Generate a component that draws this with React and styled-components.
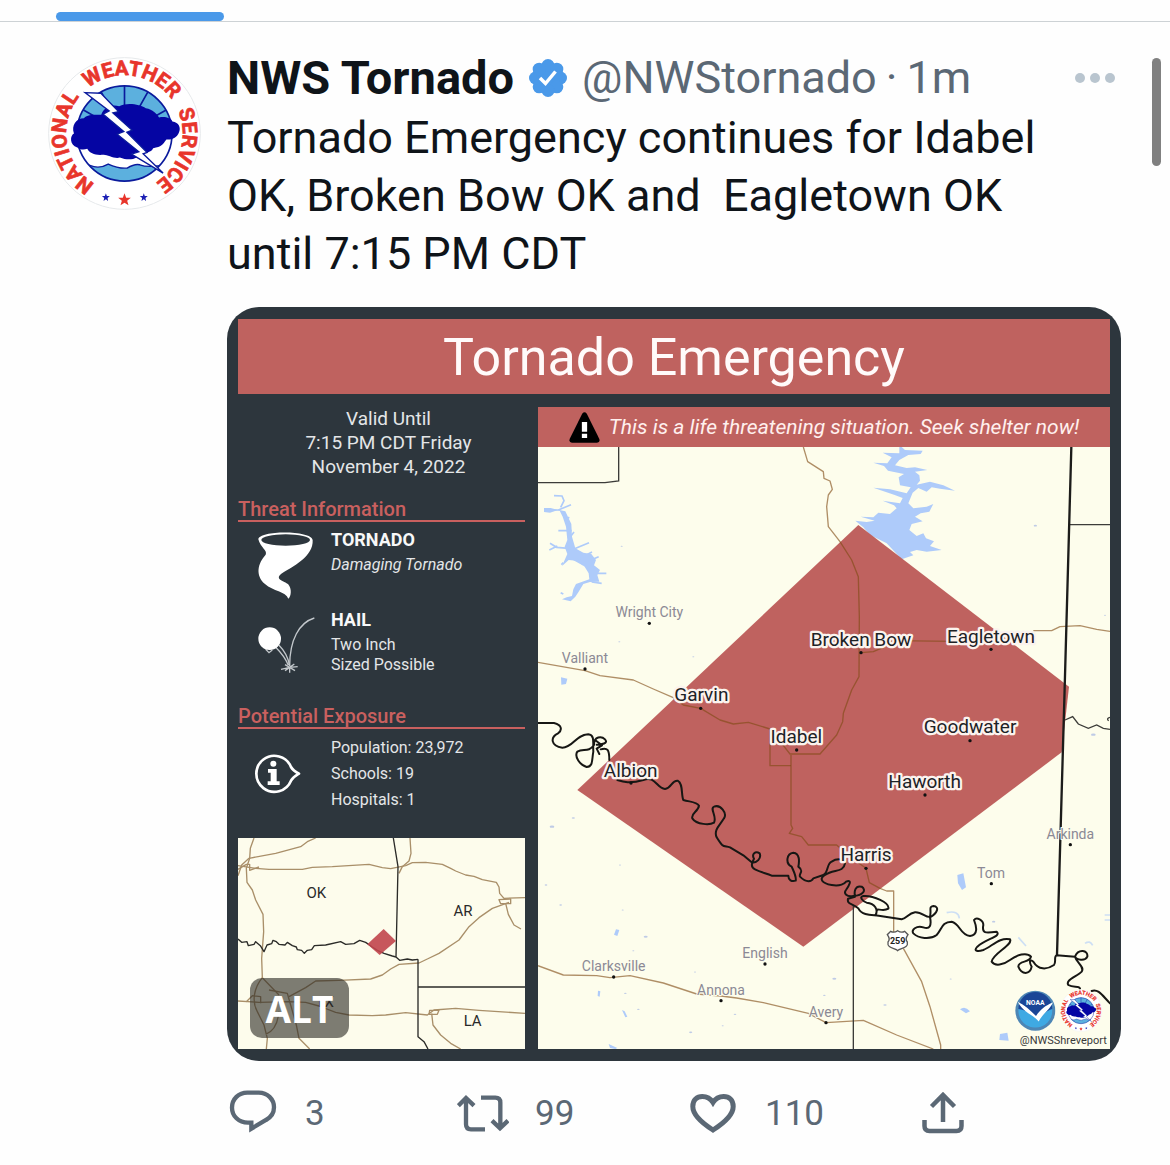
import React, { useId } from 'react';
import styled, { createGlobalStyle } from 'styled-components';

const GlobalStyle = createGlobalStyle`
  * {
    box-sizing: border-box;
  }

  body {
    margin: 0;
    background: #fefefe;
    color: #0f1419;
    font-family: Roboto, 'Liberation Sans', sans-serif;
  }
`;

// Page
const Page = styled.main`
  position: relative;
`;

const TabBar = styled.nav`
  display: flex;
  align-items: flex-end;
  height: 22px;
  padding-left: 56px;
  border-bottom: 1px solid #cdd2d5;
`;

const TabIndicator = styled.div`
  width: 168px;
  height: 9px;
  border-radius: 5px;
  background: #4a99e9;
`;

const ScrollThumb = styled.div`
  position: absolute;
  top: 58px;
  right: 9px;
  width: 9px;
  height: 108px;
  border-radius: 5px;
  background: #808080;
`;

// Tweet
const Tweet = styled.article`
  display: flex;
  gap: 26px;
  padding: 27px 49px 24px 48px;
`;

const Avatar = styled.a`
  flex: none;
  width: 153px;
  height: 153px;
  margin-top: 8px;

  svg {
    display: block;
  }
`;

const Content = styled.div`
  flex: 1;
  min-width: 0;
`;

const Header = styled.header`
  display: flex;
  align-items: center;
  gap: 15px;
  height: 58px;
  font-size: 45px;
  line-height: 58px;
  white-space: nowrap;
`;

const Name = styled.a`
  color: #0f1419;
  font-size: 47px;
  font-weight: 700;
  text-decoration: none;
`;

const Meta = styled.span`
  display: flex;
  gap: 9px;
  color: #5b6875;

  a {
    color: inherit;
    text-decoration: none;
  }
`;

const MoreButton = styled.button`
  margin-left: auto;
  padding: 0 10px;
  border: 0;
  background: none;
  line-height: 0;
`;

const TweetText = styled.p`
  margin: 2px 0 24px;
  padding-right: 40px;
  font-size: 45px;
  line-height: 58px;
  white-space: pre-wrap;
`;

const Actions = styled.footer`
  display: grid;
  grid-template-columns: repeat(3, 230fr) 204fr;
  height: 56px;
  margin-top: 24px;
`;

const ActionButton = styled.button`
  display: flex;
  align-items: center;
  gap: 26px;
  padding: 0;
  border: 0;
  background: none;
  color: #5b6875;
  font-family: inherit;
  font-size: 35px;

  svg {
    width: 52px;
    height: 48px;
    fill: none;
    stroke: currentColor;
  }
`;

// Warning graphic
const Card = styled.section`
  position: relative;
  padding: 12px 11px 12px;
  border-radius: 32px;
  overflow: hidden;
  background: #2d363d;
  color: #e4e6e8;
`;

const CardTitle = styled.h2`
  margin: 0 0 13px;
  padding-top: 3px;
  background: #bf625f;
  color: #fffafa;
  font-size: 52px;
  font-weight: 400;
  line-height: 72px;
  text-align: center;
`;

const CardBody = styled.div`
  display: grid;
  grid-template-columns: 287fr 572fr;
  gap: 13px;
`;

const Sidebar = styled.div`
  display: flex;
  flex-direction: column;
`;

const ValidUntil = styled.p`
  margin: 0;
  padding-left: 14px;
  font-size: 19px;
  line-height: 24px;
  text-align: center;
`;

const SectionTitle = styled.h3`
  margin: ${(props) => props.$top}px 0 6px;
  border-bottom: 2px solid #c9605f;
  color: #c9605f;
  font-size: 20px;
  font-weight: 500;
  line-height: 22px;
`;

const Threat = styled.div`
  display: grid;
  grid-template-columns: 93px 1fr;
  align-items: ${(props) => props.$align || 'start'};

  & + & {
    margin-top: 8px;
  }

  svg {
    display: block;
    width: 93px;
  }
`;

const ThreatName = styled.h4`
  margin: 0 0 3px;
  color: #f8f8f8;
  font-size: 18px;
  font-weight: 700;
  line-height: 24px;
`;

const ThreatText = styled.p`
  margin: 0;
  font-size: 16px;
  font-style: ${(props) => (props.$italic ? 'italic' : 'normal')};
  line-height: 20px;
`;

const Exposure = styled.ul`
  margin: 0;
  padding: 0;
  list-style: none;
  font-size: 16px;
  line-height: 26px;
`;

const InsetMap = styled.svg`
  display: block;
  width: 100%;
  margin-top: auto;
  background: #fdfcec;
`;

const MapPanel = styled.div`
  min-width: 0;
`;

const Banner = styled.p`
  display: flex;
  align-items: center;
  justify-content: center;
  gap: 9px;
  height: 40px;
  margin: 0;
  background: #bf625f;
  color: #fff0ee;
  font-size: 21px;
  font-style: italic;
  white-space: nowrap;
`;

const AreaMap = styled.svg`
  display: block;
  width: 100%;
  background: #fdfdec;
`;

const AltButton = styled.button`
  position: absolute;
  bottom: 23px;
  left: 23px;
  width: 99px;
  height: 60px;
  padding: 0;
  border: 0;
  border-radius: 12px;
  background: rgba(40, 38, 34, 0.6);
  color: #fff;
  font-family: 'Open Sans', sans-serif;
  font-size: 37px;
  font-weight: 700;
`;

const PlaceText = styled.text`
  fill: ${(props) => (props.$inside ? '#1d2226' : '#8b8995')};
  stroke: ${(props) => (props.$inside ? '#fbf3ee' : '#fdfdec')};
  stroke-width: ${(props) => (props.$inside ? 14 : 6)}px;
  stroke-linejoin: round;
  paint-order: stroke;
  font-size: ${(props) => (props.$inside ? 57 : 42)}px;
  text-anchor: middle;
`;

const StateText = styled.text`
  fill: #2a2a2a;
  font-size: 45px;
  text-anchor: middle;
`;

const places = [
  { name: 'Broken Bow', x: 993, y: 738, dot: [993, 758], inside: true },
  { name: 'Eagletown', x: 1383, y: 728, dot: [1383, 748], inside: true },
  { name: 'Garvin', x: 514, y: 904, dot: [512, 925], inside: true },
  { name: 'Idabel', x: 799, y: 1028, dot: [800, 1050], inside: true },
  { name: 'Albion', x: 302, y: 1130, dot: [303, 1149], inside: true },
  { name: 'Goodwater', x: 1320, y: 1000, dot: [1320, 1022], inside: true },
  { name: 'Haworth', x: 1184, y: 1163, dot: [1185, 1185], inside: true },
  { name: 'Harris', x: 1008, y: 1384, dot: [1008, 1405], inside: true },
  { name: 'Wright City', x: 358, y: 651, dot: [358, 670] },
  { name: 'Valliant', x: 165, y: 790, dot: [165, 807] },
  { name: 'English', x: 705, y: 1673, dot: [705, 1692] },
  { name: 'Clarksville', x: 251, y: 1713, dot: [251, 1731] },
  { name: 'Annona', x: 573, y: 1784, dot: [573, 1802] },
  { name: 'Avery', x: 888, y: 1850, dot: [888, 1868] },
  { name: 'Arkinda', x: 1621, y: 1316, dot: [1621, 1334] },
  { name: 'Tom', x: 1383, y: 1433, dot: [1384, 1451] },
];

const ponds = [
  [66, 1280, 7], [130, 1254, 5], [270, 1395, 3], [48, 1455, 4], [92, 1515, 4],
  [278, 1530, 3], [347, 1610, 6], [310, 1652, 3], [286, 1780, 4], [325, 1828, 4],
  [482, 1897, 5], [615, 1843, 4], [578, 1877, 3], [495, 1716, 3], [490, 770, 3],
  [268, 725, 3], [275, 439, 3], [1516, 377, 5], [913, 1736, 6], [1262, 1737, 3],
  [1391, 1565, 5], [1725, 646, 3], [1690, 1004, 7], [883, 1786, 4], [1065, 1815, 5],
];

function NwsLogo(props) {
  const ring = useId();
  return (
    <svg viewBox="24 26 460 460" overflow="visible" role="img" aria-label="National Weather Service" {...props}>
      <defs>
        <path id={ring} d="M254 431a175 175 0 0 1 0-350a175 175 0 0 1 0 350" />
        <clipPath id={`${ring}-disc`}>
          <circle cx="254" cy="256" r="143" />
        </clipPath>
      </defs>
      <circle cx="254" cy="256" r="228" fill="#fff" stroke="#e6e9eb" strokeWidth="3" />
      <g clipPath={`url(#${ring}-disc)`}>
        <path d="M100 100H410V256H100z" fill="#5cb0de" />
        <path d="M100 345L150 352Q178 364 205 348Q235 362 262 360Q285 346 300 350Q330 362 400 345V410H100z" fill="#5cb0de" stroke="#0a1a9c" strokeWidth="4" />
        <path d="M254 256V110M254 256L182 128M254 256L326 128M254 256L128 184M254 256L382 184" stroke="#0a1a9c" strokeWidth="5" />
      </g>
      <circle cx="254" cy="256" r="143" fill="none" stroke="#0a1a9c" strokeWidth="5" />
      <path
        d="M112 298C88 290 90 262 102 256C94 232 108 210 132 210C145 198 165 200 184 200C190 178 215 166 238 174C262 162 300 168 318 180C340 184 350 196 358 208C375 204 395 210 398 220C418 222 424 240 418 252C412 268 396 276 380 274C368 290 366 296 340 300C336 312 316 316 306 312C296 332 270 340 240 328C225 334 200 318 190 320C165 322 150 316 142 302C130 306 120 304 112 298z"
        fill="#0505a3"
      />
      <path
        d="M135 133L183 135L236 190L219 194L277 246L261 252L322 313L310 317L370 375L275 318L297 311L232 258L252 250L190 198L208 188z"
        fill="#fff"
        stroke="#0a1a9c"
        strokeWidth="4"
      />
      <g fill="#e8352b" stroke="#e8352b" strokeWidth="2" fontSize="62" fontWeight="700" textAnchor="middle">
        <text><textPath href={`#${ring}`} startOffset="22.2%">NATIONAL</textPath></text>
        <text><textPath href={`#${ring}`} startOffset="52.2%">WEATHER</textPath></text>
        <text><textPath href={`#${ring}`} startOffset="79.700%">SERVICE</textPath></text>
      </g>
      <path d="M254 436l5 13h14l-11 9 4 14-12-8-12 8 4-14-11-9h14z" fill="#e8352b" />
      <path d="M198 436l3 8h9l-7 6 2 9-7-5-7 5 2-9-7-6h9zM312 436l3 8h9l-7 6 2 9-7-5-7 5 2-9-7-6h9z" fill="#1b1fb4" />
    </svg>
  );
}

function NoaaLogo(props) {
  return (
    <svg viewBox="0 0 120 120" role="img" aria-label="NOAA" {...props}>
      <circle cx="60" cy="60" r="59" fill="#4d86b5" />
      <circle cx="60" cy="60" r="50" fill="#3fa9e3" />
      <path d="M10 55A50 50 0 0 1 110 55C92 60 80 72 66 82C50 70 32 58 10 55z" fill="#1a4596" />
      <path d="M8 34C28 44 44 58 62 76C74 58 90 44 112 36C102 58 82 68 70 92C54 72 24 66 8 34z" fill="#fff" />
      <text x="60" y="44" fill="#fff" fontSize="20" fontWeight="700" textAnchor="middle">NOAA</text>
    </svg>
  );
}

function VerifiedBadge() {
  return (
    <svg width="38" height="40" viewBox="-19 -20 38 40" role="img" aria-label="Verified account">
      <g fill="#4a99e9">
        <circle r="15" />
        {[0, 45, 90, 135, 180, 225, 270, 315].map((angle) => (
          <circle key={angle} cy="-12.500" r="6.500" transform={`rotate(${angle})`} />
        ))}
      </g>
      <path d="M-8 0L-2.500 5.500L7.500 -6.500" fill="none" stroke="#fff" strokeWidth="3.500" />
    </svg>
  );
}

function TornadoIcon() {
  return (
    <svg viewBox="37 684 279 216" aria-hidden="true">
      <path
        fill="#fff"
        d="M98 718C100 690 258 690 261 720C264 770 200 800 166 822C148 838 172 842 187 852C200 866 196 890 188 896C180 874 142 874 118 852C88 826 96 790 120 764C126 752 104 742 98 718z"
      />
      <ellipse cx="180" cy="720" rx="73" ry="17" fill="#2d363d" />
    </svg>
  );
}

function HailIcon() {
  return (
    <svg viewBox="37 75 279 180" aria-hidden="true" fill="none" stroke="#c3c8cc" strokeWidth="4">
      <path d="M266 84C220 98 192 150 192 228" />
      <path d="M160 166C178 184 188 204 192 228M150 172C168 190 180 206 188 226M120 178L130 188L140 180" />
      <path d="M192 232L166 238M192 232L216 230M192 232L178 224M192 232L206 222M192 232L192 248M192 232L178 242M192 232L208 242" />
      <circle cx="132" cy="146" r="34" fill="#fff" stroke="none" />
    </svg>
  );
}

function InfoIcon() {
  return (
    <svg viewBox="37 487 279 132" aria-hidden="true">
      <path
        d="M196 532A54 54 0 1 0 196 573C202 562 210 558 220 552C210 547 202 543 196 532z"
        fill="none"
        stroke="#fff"
        strokeWidth="8"
        strokeLinejoin="round"
      />
      <circle cx="143" cy="522" r="9" fill="#fff" />
      <path d="M127 538H153V575H162V586H126V575H135V549H127z" fill="#fff" />
    </svg>
  );
}

function WarningIcon() {
  return (
    <svg width="31" height="31" viewBox="104 36 94 94" aria-hidden="true">
      <path d="M144 41Q151 32 158 41L196 118Q199 128 189 129H113Q103 128 106 118z" fill="#000" />
      <path d="M143 66H159V96H143zM143 102H159V115H143z" fill="#fff" />
    </svg>
  );
}

function Inset() {
  return (
    <InsetMap viewBox="37 39 861 633" role="img" aria-label="Regional map">
      <g fill="none" stroke="#a98f69" strokeWidth="4" strokeLinejoin="round">
        <path d="M85 39L74 70L72 100L62 130L64 172L80 195L90 225L112 268L114 320L108 400L110 458L160 510" />
        <path d="M37 152L48 120L70 100L150 85L225 65L245 50L270 39" />
        <path d="M37 122L90 130L130 133H230L260 127L320 125L430 118L470 128L495 131L540 122L560 113L600 112L650 118L675 130L690 138L720 150L745 154L770 164L812 172L820 186L822 205L835 220L898 218" />
        <path d="M37 133L62 118H72V136L100 126M820 224L855 222V236H825z" />
        <path d="M553 39L556 85L550 108L530 125L520 145" />
        <path d="M850 232L800 250L760 278L730 305L700 345L640 385L605 402L580 414L520 418L495 432L470 450L435 462L340 466L270 468L240 488L190 515" />
        <path d="M840 235L848 268L865 300L886 312" />
        <path d="M37 528L100 532L190 530L240 532L280 543L330 562L370 570L440 572L480 570L540 563L605 570L625 555L690 550L760 556L898 565" />
        <path d="M612 556H640L635 568H610zM618 565L622 600L645 630L675 655L705 672" />
        <path d="M110 458C84 490 78 530 95 560L115 600L125 640L122 672M130 495L185 505L195 540L212 600L220 640L252 672M160 560C156 600 142 620 120 628M62 530L80 512L105 515V535" />
      </g>
      <g fill="none" stroke="#2b2b28" strokeWidth="4" strokeLinejoin="round">
        <path d="M503 39L517 125L514 260L511 395M577 403V635L595 650L607 672M577 486H898" />
        <path d="M37 342L48 352L64 350L68 362L85 358L90 350L104 362L115 380L124 360L138 356L142 346L152 350L160 358L178 360L185 352L200 362L212 366L215 374L228 376L236 385L245 376L258 374L266 362L300 360L345 350L360 358L385 356L402 346L420 352L440 366L455 376L475 385L500 393L511 396L522 406L545 402L560 405L577 403" />
      </g>
      <path d="M474 312L511 348L462 390L425 358z" fill="#c1454c" fillOpacity="0.9" />
      <StateText x="272" y="218">OK</StateText>
      <StateText x="712" y="272">AR</StateText>
      <StateText x="741" y="603">LA</StateText>
      <StateText x="297" y="546">TX</StateText>
    </InsetMap>
  );
}

function WarningMap() {
  return (
    <AreaMap viewBox="24 141 1716 1806" role="img" aria-label="Tornado emergency area">
      {/* lakes */}
      <g fill="#aecbfa">
        <path d="M1115 141L1125 150L1178 152L1172 162L1135 165L1108 180L1095 196L1130 204L1155 202L1192 210L1155 215L1168 226L1170 242L1160 254L1200 245L1240 256L1275 272L1230 266L1205 262L1190 275L1165 264L1148 278L1135 310L1150 325L1190 320L1210 312L1198 335L1172 340L1155 350L1178 364L1145 372L1138 390L1160 408L1180 400L1188 415L1212 424L1200 438L1235 450L1190 455L1160 450L1140 456L1150 466L1115 478L1070 430L1020 405L1000 382L976 362L1010 366L1034 362L992 350L1030 352L1045 338L1080 342L1100 325L1092 316L1058 302L1110 310L1118 294L1092 284L1030 263L1080 268L1130 280L1142 262L1110 256L1106 232L1122 222L1074 212L1062 198L1030 188L1072 190L1085 172L1058 158L1108 160L1108 141z" />
        <path d="M1282 1425L1300 1420L1308 1462L1296 1470L1284 1450zM1410 1902L1432 1898L1436 1922L1408 1920zM1290 1828Q1305 1816 1320 1834L1308 1840zM93 832L112 836L108 852L94 854zM258 1588L268 1590L262 1608L252 1604zM204 1772L211 1774L209 1790L203 1788zM236 1932L262 1944L256 1947L240 1944zM276 1830L284 1834L292 1850L286 1852z" />
        <path d="M88 330L106 334L124 372L126 410L136 445L160 458L184 462L198 480L192 496L210 510L202 525L208 545L180 546L160 552L146 575L136 590L122 604L96 598L110 592L126 588L130 568L138 552L178 538L176 520L164 500L140 482L116 480L96 498L112 462L104 440L112 420L108 380L98 350z" />
      </g>
      <g fill="none" stroke="#aecbfa" strokeWidth="5">
        <path d="M72 287L96 288L102 302L92 322M42 330H90" />
        <path d="M85 330L123 314M85 392H125M60 430L80 442L125 446M58 450L82 438M130 448L177 428M140 480L186 456M160 490L206 470M190 520H229M185 546L215 550M100 582L92 578M120 412L132 396M94 494L100 488M130 478L160 494M104 360L118 352" />
        <path d="M1250 1538Q1285 1530 1288 1555M1465 1612L1488 1638M1665 1630Q1680 1620 1688 1636M1724 1545H1740M1724 1560H1740" strokeOpacity="0.6" />
      </g>
      <path d="M42 324L62 324L84 330L60 338L42 336z" fill="#aecbfa" />
      <g fill="#bfcbe6">
        {ponds.map(([x, y, r], index) => (
          <ellipse key={`pond-${index}`} cx={x} cy={y} rx={r} ry={r / 2} />
        ))}
      </g>

      <path d="M985 375L1617 860L1595 1057L820 1640L142 1170z" fill="#bf625f" />

      {/* roads */}
      <g fill="none" stroke="#804a14" strokeOpacity="0.62" strokeWidth="4" strokeLinejoin="round">
        <path d="M820 141L833 185L880 215L882 235L900 243L907 268L895 285L890 320L895 380L930 425L965 480L985 530L988 650L987 830L965 870L940 940L938 965L920 1005L870 1062H780L755 1030" />
        <path d="M993 758L1030 755L1060 742L1090 722L1270 724M1510 692H1565L1590 680L1650 677L1700 688L1740 694" />
        <path d="M24 787L165 812L210 827L310 840L370 867L430 893L460 915L512 925L570 960L610 972L655 967L720 987V1097H783" />
        <path d="M783 1065V1275L788 1285L778 1300L815 1310L835 1335H920L960 1370L1008 1405L1018 1448L1050 1465L1070 1473H1091V1600M1120 1645L1175 1745L1200 1820L1232 1935V1947" />
        <path d="M24 1697L100 1725L200 1727L240 1733L300 1727L400 1749L500 1782L573 1788L620 1794L700 1808L835 1840L888 1868L1000 1861L1100 1905L1210 1947" />
      </g>

      {/* county and state lines */}
      <g fill="none" stroke="#3c3c39" strokeWidth="4">
        <path d="M24 248H225L266 243V141M970 1515V1947M1618 374H1740" />
        <path d="M1605 960L1628 950L1645 972L1675 985L1700 975L1720 985L1740 988M1740 952Q1728 956 1736 962" />
      </g>
      <path d="M1624 141L1603 900L1581 1665" fill="none" stroke="#1c1c1a" strokeWidth="7" />

      {/* Red River */}
      <g fill="none" stroke="#171714" strokeWidth="6" strokeLinejoin="round" strokeLinecap="round">
        <path d="M24 969H72C98 975 96 992 84 1000C60 1012 62 1038 97 1043C130 1043 135 1005 175 1003C196 1005 188 1030 190 1055C185 1080 190 1100 170 1101C150 1095 132 1070 142 1055C160 1045 176 1058 192 1035C192 1008 215 1008 225 1018C236 1030 215 1034 200 1034M198 1022L216 1036L200 1046L208 1062M212 1048C232 1042 238 1048 238 1080" />
        <path d="M262 1140C280 1146 300 1152 340 1140C375 1125 380 1165 405 1167C425 1165 425 1140 443 1142C460 1150 453 1185 460 1200C480 1206 500 1205 507 1217C505 1235 482 1240 487 1255C500 1275 540 1275 552 1268C562 1250 538 1225 552 1220C572 1212 592 1240 582 1255C570 1275 550 1290 560 1312C580 1345 580 1336 600 1342L640 1366L665 1387C680 1390 695 1375 689 1360C676 1352 664 1362 672 1376C664 1390 662 1402 675 1408C695 1418 710 1420 725 1427H775C775 1440 785 1446 797 1442C800 1430 790 1412 785 1400C765 1390 770 1360 790 1358C810 1360 808 1385 805 1400C825 1415 805 1420 810 1430C830 1450 845 1445 850 1435L880 1425C895 1420 890 1390 905 1385C920 1375 940 1375 945 1390C940 1420 910 1406 885 1425C866 1436 875 1450 905 1455C930 1460 945 1450 948 1445C970 1436 955 1460 948 1470C940 1480 950 1492 970 1488C1000 1486 1010 1470 995 1460C975 1455 972 1475 975 1490L954 1496C950 1515 970 1510 985 1525C995 1545 1020 1545 1036 1546C1046 1530 1035 1510 1010 1508C1000 1505 985 1490 1000 1488C1030 1486 1080 1508 1075 1526C1060 1536 1040 1524 1042 1530" />
        <path d="M1036 1546L1115 1558C1130 1555 1135 1540 1155 1537C1175 1535 1190 1555 1200 1550C1205 1530 1195 1520 1210 1518C1230 1520 1222 1540 1200 1552C1205 1575 1200 1590 1180 1582C1160 1575 1142 1590 1150 1600C1165 1615 1200 1620 1220 1605C1235 1590 1235 1565 1265 1565C1290 1570 1290 1605 1320 1608C1345 1605 1340 1580 1332 1560C1340 1550 1360 1560 1360 1575C1355 1600 1365 1600 1400 1595C1415 1610 1370 1615 1342 1640C1328 1655 1345 1655 1360 1650C1385 1640 1410 1610 1440 1618C1450 1635 1388 1660 1385 1685C1395 1700 1420 1695 1440 1680C1460 1665 1490 1655 1503 1670C1500 1690 1465 1680 1465 1700C1475 1725 1500 1725 1505 1700C1496 1685 1500 1676 1510 1685C1525 1710 1550 1710 1572 1695C1580 1685 1570 1670 1580 1666L1635 1670C1645 1645 1675 1650 1672 1670C1665 1685 1640 1680 1635 1670C1640 1690 1665 1700 1655 1715C1640 1730 1605 1740 1615 1755C1630 1765 1645 1755 1650 1765M1685 1773C1705 1765 1718 1788 1740 1810" />
      </g>

      <path d="M1082 1594Q1092 1600 1103 1592Q1114 1600 1124 1594L1134 1604Q1124 1618 1132 1626C1136 1646 1110 1644 1103 1652C1096 1644 1070 1646 1074 1626Q1082 1618 1072 1604z" fill="#fff" stroke="#555" strokeWidth="4" />
      <text x="1103" y="1631" fill="#222" fontSize="27" fontWeight="700" textAnchor="middle">259</text>

      {places.map((place) => (
        <g key={place.name}>
          <circle cx={place.dot[0]} cy={place.dot[1]} r="5" fill="#111" />
          <PlaceText x={place.x} y={place.y} $inside={place.inside}>{place.name}</PlaceText>
        </g>
      ))}

      <NoaaLogo x="1455" y="1771" width="122" height="122" />
      <NwsLogo x="1590" y="1769" width="126" height="126" />
      <text x="1600" y="1932" fill="#3a3a3a" fontSize="33" textAnchor="middle">@NWSShreveport</text>
    </AreaMap>
  );
}

function WarningCard() {
  return (
    <Card aria-label="Tornado Emergency graphic">
      <CardTitle>Tornado Emergency</CardTitle>
      <CardBody>
        <Sidebar>
          <ValidUntil>
            Valid Until<br />
            7:15 PM CDT Friday<br />
            November 4, 2022
          </ValidUntil>

          <SectionTitle $top={19}>Threat Information</SectionTitle>
          <Threat>
            <TornadoIcon />
            <div>
              <ThreatName>TORNADO</ThreatName>
              <ThreatText $italic>Damaging Tornado</ThreatText>
            </div>
          </Threat>
          <Threat $align="end">
            <HailIcon />
            <div>
              <ThreatName>HAIL</ThreatName>
              <ThreatText>Two Inch<br />Sized Possible</ThreatText>
            </div>
          </Threat>

          <SectionTitle $top={30}>Potential Exposure</SectionTitle>
          <Threat $align="center">
            <InfoIcon />
            <Exposure>
              <li>Population: 23,972</li>
              <li>Schools: 19</li>
              <li>Hospitals: 1</li>
            </Exposure>
          </Threat>

          <Inset />
        </Sidebar>

        <MapPanel>
          <Banner>
            <WarningIcon />
            This is a life threatening situation. Seek shelter now!
          </Banner>
          <WarningMap />
        </MapPanel>
      </CardBody>
      <AltButton type="button">ALT</AltButton>
    </Card>
  );
}

export default function App() {
  return (
    <Page>
      <GlobalStyle />
      <TabBar>
        <TabIndicator />
      </TabBar>

      <Tweet>
        <Avatar href="#profile">
          <NwsLogo width="153" height="153" />
        </Avatar>

        <Content>
          <Header>
            <Name href="#profile">NWS Tornado</Name>
            <VerifiedBadge />
            <Meta>
              <a href="#profile">@NWStornado</a>
              <span>·</span>
              <a href="#status">1m</a>
            </Meta>
            <MoreButton type="button" aria-label="More">
              <svg width="32" height="12" viewBox="0 0 32 12" fill="#b9c5cf" overflow="visible">
                <circle cx="1" cy="6" r="5" />
                <circle cx="16" cy="6" r="5" />
                <circle cx="31" cy="6" r="5" />
              </svg>
            </MoreButton>
          </Header>

          <TweetText>
            {'Tornado Emergency continues for Idabel OK, Broken Bow OK and  Eagletown OK until 7:15 PM CDT'}
          </TweetText>

          <WarningCard />

          <Actions>
            <ActionButton type="button" aria-label="Reply, 3">
              <svg viewBox="3 788 156 144" strokeWidth="13">
                <path d="M64 799H98C124 799 144 818 144 843C144 860 135 873 120 881L76 907V889H66C38 889 18 869 18 844C18 818 38 799 64 799z" />
              </svg>
              3
            </ActionButton>
            <ActionButton type="button" aria-label="Retweet, 99">
              <svg viewBox="693 788 156 144" strokeWidth="13">
                <path d="M697 838L720 815L744 838M720 816V894Q720 909 735 909H777M765 814H808Q823 814 823 829V906M798 883L822 906L846 883" />
              </svg>
              99
            </ActionButton>
            <ActionButton type="button" aria-label="Like, 110">
              <svg viewBox="-3 -4 52 48" strokeWidth="5">
                <path d="M23 37C12 30 2.800 22 2.800 13.500C2.800 7 7 3.500 12.300 3.500C17 3.500 20.500 5.500 23 9.500C25.500 5.500 29 3.500 33.700 3.500C39 3.500 43.200 7 43.200 13.500C43.200 22 34 30 23 37z" />
              </svg>
              110
            </ActionButton>
            <ActionButton type="button" aria-label="Share">
              <svg viewBox="-5 -3 52 48" strokeWidth="4.500">
                <path d="M21 30V3M9.500 14.500L21 3L32.500 14.500M2.500 28V34Q2.500 39 7.500 39H34.500Q39.500 39 39.500 34V28" />
              </svg>
            </ActionButton>
          </Actions>
        </Content>
      </Tweet>
      <ScrollThumb />
    </Page>
  );
}
